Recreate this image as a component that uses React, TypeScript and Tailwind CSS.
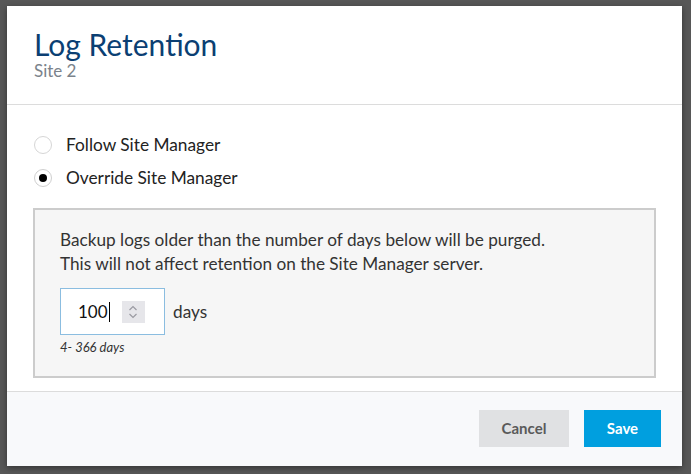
export default function App() {
  return (
    <div className="h-[474px] w-[691px] overflow-hidden bg-[#575757] pl-[7px] pt-[6px] font-['Lato','Liberation_Sans',sans-serif]">
      <div className="flex h-[460px] w-[675px] flex-col bg-white shadow-[0_2px_6px_rgba(0,0,0,0.4)]">
        <div className="h-[99px] border-b border-[#dcdcdc] pl-[27px] pt-[20px]">
          <h1 className="text-[30px] leading-[36px] text-[#0b3f73]">Log Retention</h1>
          <p className="text-[17px] leading-[18px] text-[#7b838b]">Site 2</p>
        </div>
        <div className="flex flex-1 flex-col px-[26px] pt-[23px]">
          <label className="flex h-[33px] items-center gap-[14px]">
            <span className="ml-[1px] h-[18px] w-[18px] rounded-full border border-[#d6d6d6] bg-white" />
            <span className="text-[17.3px] text-[#222]">Follow Site Manager</span>
          </label>
          <label className="flex h-[33px] items-center gap-[14px]">
            <span className="ml-[1px] flex h-[18px] w-[18px] items-center justify-center rounded-full border border-[#cfcfcf] bg-white">
              <span className="h-[8px] w-[8px] rounded-full bg-black" />
            </span>
            <span className="text-[17.3px] text-[#222]">Override Site Manager</span>
          </label>
          <div className="mt-[14px] h-[170px] border-2 border-[#cccccc] bg-[#f6f6f6] pl-[25px] pt-[18px]">
            <p className="text-[17.2px] leading-[24px] text-[#333]">
              Backup logs older than the number of days below will be purged.
              <br />
              This will not affect retention on the Site Manager server.
            </p>
            <div className="mt-[12px] flex items-center gap-[8px]">
              <div className="flex h-[47px] w-[105px] items-center border border-[#8bbde0] bg-white pl-[17px]">
                <span className="text-[17px] text-[#111]">100</span>
                <span className="ml-[1px] h-[20px] w-px bg-black" />
                <span className="ml-[12px] flex h-[22px] w-[23px] items-center justify-center bg-[#e6e6ea]">
                  <svg width="10" height="16" viewBox="0 0 10 16" fill="none" stroke="#9a9aa2" strokeWidth="1.2">
                    <path d="M1.5 6 L5 2.5 L8.5 6" />
                    <path d="M1.5 10 L5 13.5 L8.5 10" />
                  </svg>
                </span>
              </div>
              <span className="text-[17.2px] text-[#333]">days</span>
            </div>
            <p className="mt-[3px] text-[13px] italic text-[#333]">4- 366 days</p>
          </div>
        </div>
        <div className="flex h-[75px] items-start justify-end gap-[15px] border-t border-[#dcdcdc] bg-[#f8f9fb] pr-[21px] pt-[18px]">
          <button className="h-[37px] w-[90px] bg-[#e0e1e3] text-[15px] font-bold text-[#5a5a5a]">Cancel</button>
          <button className="h-[37px] w-[77px] bg-[#009fdf] text-[15px] font-bold text-white">Save</button>
        </div>
      </div>
    </div>
  );
}
